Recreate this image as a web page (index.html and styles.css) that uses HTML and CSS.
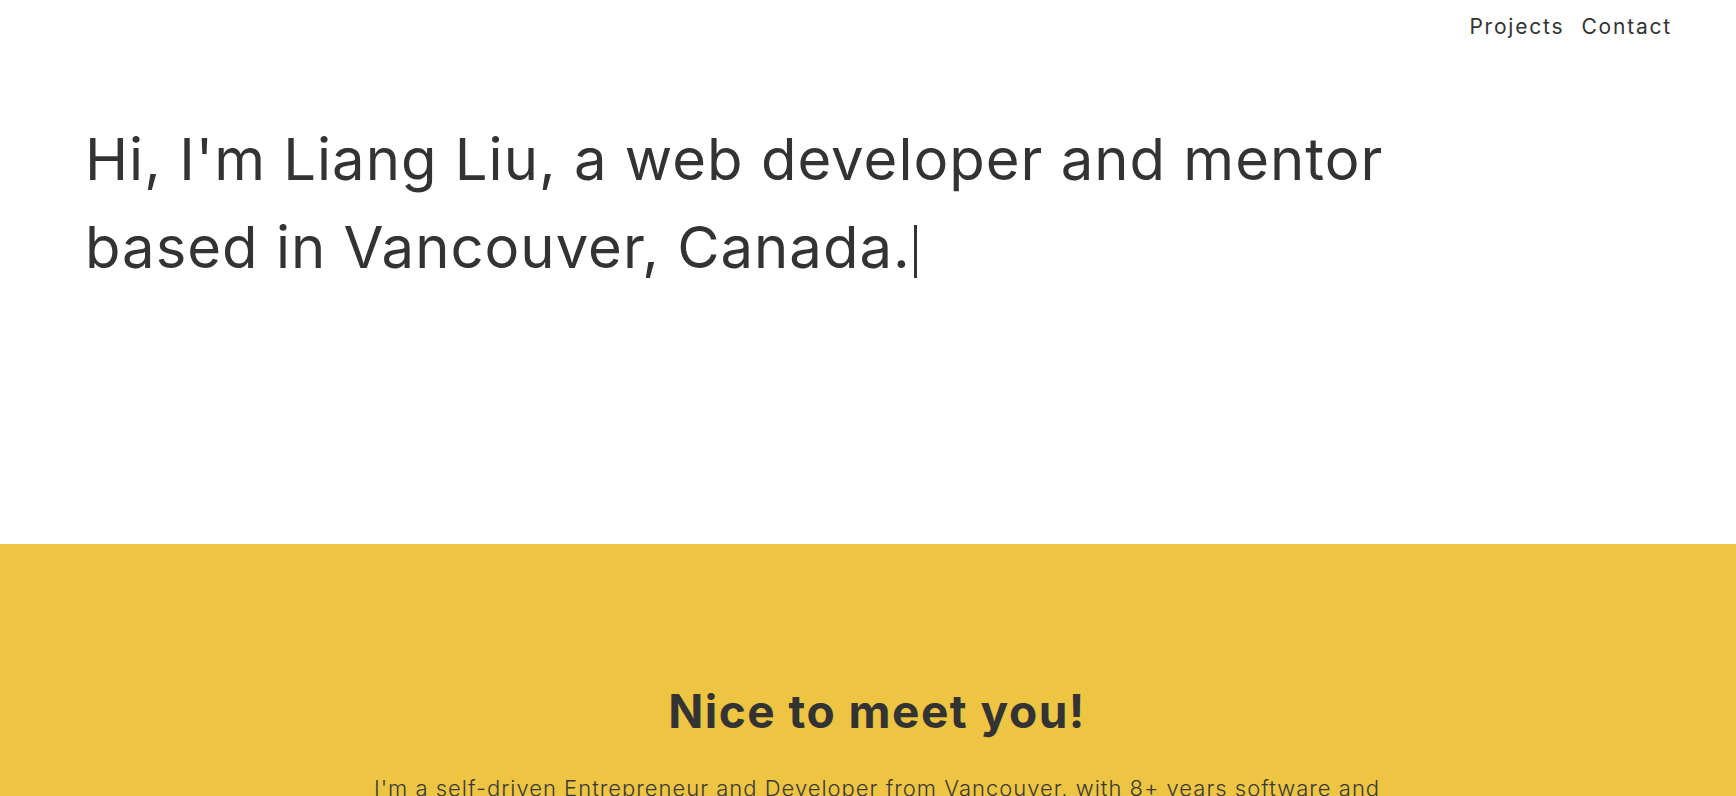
FILE: index.html
```html
<!DOCTYPE html>
<html lang="en">
<head>
<meta charset="utf-8">
<title>Liang Liu</title>
<link rel="stylesheet" href="styles.css">
</head>
<body>
<header class="topbar">
  <nav class="nav">
    <a class="nav-link" href="#projects">Projects</a>
    <a class="nav-link" href="#contact">Contact</a>
  </nav>
</header>
<section class="hero">
  <h1 class="hero-title">Hi, I'm Liang Liu, a web developer and mentor<br>based in Vancouver, Canada.<span class="caret"></span></h1>
</section>
<section class="about">
  <h2 class="about-title">Nice to meet you!</h2>
  <p class="about-text">I'm a self-driven Entrepreneur and Developer from Vancouver, with 8+ years software and development experience, building products and mentoring developers.</p>
</section>
</body>
</html>
```
FILE: styles.css
```css
* { box-sizing: border-box; }
html, body { margin: 0; padding: 0; }
body {
  font-family: "Inter", "Roboto", sans-serif;
  color: #333333;
  background: #ffffff;
  overflow: hidden;
}
.topbar {
  display: flex;
  justify-content: flex-end;
  padding: 12px 64px 0 0;
  height: 48px;
}
.nav { display: flex; gap: 17px; }
.nav-link {
  color: #333333;
  text-decoration: none;
  font-size: 21px;
  line-height: 30px;
  letter-spacing: 1.8px;
  font-weight: 400;
}
.hero {
  height: 496px;
  padding: 67px 0 0 85px;
}
.hero-title {
  margin: 0;
  font-size: 58px;
  font-weight: 400;
  line-height: 88px;
  letter-spacing: 1px;
  color: #333333;
}
.caret {
  display: inline-block;
  width: 3px;
  height: 53px;
  background: #333333;
  margin-left: 3px;
  vertical-align: -10px;
}
.about {
  background: #eec443;
  min-height: 400px;
  padding: 140px 0 0 18px;
  text-align: center;
}
.about-title {
  margin: 0;
  font-size: 46px;
  font-weight: 700;
  line-height: 55px;
  letter-spacing: 1.5px;
  color: #333333;
}
.about-text {
  max-width: 1040px;
  margin: 32px auto 0;
  font-size: 22px;
  font-weight: 300;
  line-height: 35px;
  letter-spacing: 1px;
  color: #3a3a3a;
}
```
